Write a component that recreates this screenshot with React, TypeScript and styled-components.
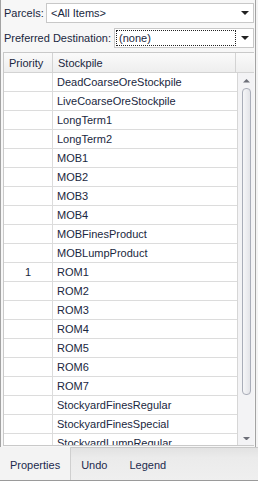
import { createGlobalStyle } from "styled-components"
import styled from "styled-components"

const GlobalStyle = createGlobalStyle`
  html, body {
    margin: 0;
    padding: 0;
    background: #f2f2f2;
  }
  body {
    font-family: "Liberation Sans", Arial, sans-serif;
    font-size: 11px;
    color: #1a2740;
  }
`

const Window = styled.div`
  width: 258px;
  height: 481px;
  display: flex;
  flex-direction: column;
  background: #f4f4f4;
  overflow: hidden;
`

const Body = styled.div`
  flex: 1;
  min-height: 0;
  display: flex;
  flex-direction: column;
  border-left: 1px solid #a3a3a3;
  border-right: 1px solid #a3a3a3;
  margin-right: 2px;
  padding: 3px 1px 0 2px;
  background: #f7f7f7;
`

const FieldRow = styled.div<{ $mt?: number }>`
  display: flex;
  align-items: center;
  margin-top: ${(p) => p.$mt ?? 0}px;
`

const Label = styled.span`
  padding-left: 1px;
  white-space: nowrap;
`

const Combo = styled.div<{ $left: number }>`
  margin-left: auto;
  width: ${(p) => 252 - p.$left}px;
  height: 18px;
  border: 1px solid #c8c8c8;
  background: #fff;
  display: flex;
  align-items: center;
  box-sizing: content-box;
`

const ComboValue = styled.div<{ $focused?: boolean }>`
  flex: 1;
  height: 14px;
  line-height: 14px;
  margin-left: 1px;
  padding-left: 2px;
  border: 1px ${(p) => (p.$focused ? "dotted #222" : "solid transparent")};
`

const ComboButton = styled.div`
  width: 17px;
  height: 18px;
  display: flex;
  align-items: center;
  justify-content: center;
`

const Grid = styled.div`
  margin-top: 4px;
  flex: 1;
  min-height: 0;
  border: 1px solid #c9c9c9;
  border-right: none;
  background: #fff;
  display: flex;
  flex-direction: column;
  margin-bottom: 1px;
`

const HeaderRow = styled.div`
  display: grid;
  grid-template-columns: 49px 183px 1fr;
  height: 19px;
  border-bottom: 1px solid #d3d3d3;
  background: linear-gradient(#fafafa, #eeeeee);
`

const HeaderCell = styled.div<{ $last?: boolean }>`
  display: flex;
  align-items: center;
  padding-left: 5px;
  border-right: ${(p) => (p.$last ? "none" : "1px solid #d3d3d3")};
`

const GridBody = styled.div`
  flex: 1;
  min-height: 0;
  display: flex;
  overflow: hidden;
`

const Rows = styled.div`
  width: 233px;
  overflow: hidden;
`

const Row = styled.div`
  display: grid;
  grid-template-columns: 49px 1fr;
  height: 18px;
  border-bottom: 1px solid #dcdcdc;
`

const Cell = styled.div<{ $center?: boolean }>`
  display: flex;
  align-items: center;
  padding-left: ${(p) => (p.$center ? 0 : 4)}px;
  justify-content: ${(p) => (p.$center ? "center" : "flex-start")};
  border-right: 1px solid #dcdcdc;
  white-space: nowrap;
  &:last-child {
    border-right: none;
  }
`

const Scrollbar = styled.div`
  flex: 1;
  border-left: 1px solid #d6d6d6;
  background: #f3f3f5;
  display: flex;
  flex-direction: column;
  align-items: center;
  padding: 6px 0 5px;
`

const Thumb = styled.div`
  width: 7px;
  height: 305px;
  margin-top: 5px;
  margin-bottom: auto;
  border: 1px solid #a9adb8;
  border-radius: 4px;
  background: linear-gradient(90deg, #f6f6f8, #e3e4e8);
`

const TabStrip = styled.div`
  height: 32px;
  display: flex;
  border-top: 1px solid #c9c9c9;
  border-bottom: 1px solid #9a9a9a;
  background: linear-gradient(#e2e2e2, #ebebeb 30%, #efefef);
`

const Tab = styled.div<{ $active?: boolean }>`
  display: flex;
  align-items: center;
  padding: 2px ${(p) => (p.$active ? 10 : 12)}px 0 10px;
  background: ${(p) => (p.$active ? "#f3f3f3" : "transparent")};
  border-right: ${(p) => (p.$active ? "1px solid #cfcfcf" : "none")};
  margin-top: ${(p) => (p.$active ? -1 : 0)}px;
  font-size: 11px;
  color: #1c2a4d;
`

const Arrow = ({ color = "#222", up = false, w = 8 }: { color?: string; up?: boolean; w?: number }) => (
  <svg width={w} height={w / 2} viewBox="0 0 8 4">
    <path d={up ? "M0 4 L4 0 L8 4 Z" : "M0 0 L8 0 L4 4 Z"} fill={color} />
  </svg>
)

const stockpiles = [
  "DeadCoarseOreStockpile",
  "LiveCoarseOreStockpile",
  "LongTerm1",
  "LongTerm2",
  "MOB1",
  "MOB2",
  "MOB3",
  "MOB4",
  "MOBFinesProduct",
  "MOBLumpProduct",
  "ROM1",
  "ROM2",
  "ROM3",
  "ROM4",
  "ROM5",
  "ROM6",
  "ROM7",
  "StockyardFinesRegular",
  "StockyardFinesSpecial",
  "StockyardLumpRegular",
]

const priorities: Record<string, string> = { ROM1: "1" }

export default function App() {
  return (
    <>
      <GlobalStyle />
      <Window>
        <Body>
          <FieldRow>
            <Label>Parcels:</Label>
            <Combo $left={46}>
              <ComboValue>&lt;All Items&gt;</ComboValue>
              <ComboButton>
                <Arrow />
              </ComboButton>
            </Combo>
          </FieldRow>
          <FieldRow $mt={5}>
            <Label>Preferred Destination:</Label>
            <Combo $left={114}>
              <ComboValue $focused>(none)</ComboValue>
              <ComboButton>
                <Arrow />
              </ComboButton>
            </Combo>
          </FieldRow>
          <Grid>
            <HeaderRow>
              <HeaderCell>Priority</HeaderCell>
              <HeaderCell>Stockpile</HeaderCell>
              <HeaderCell $last />
            </HeaderRow>
            <GridBody>
              <Rows>
                {stockpiles.map((name) => (
                  <Row key={name}>
                    <Cell $center>{priorities[name] ?? ""}</Cell>
                    <Cell>{name}</Cell>
                  </Row>
                ))}
              </Rows>
              <Scrollbar>
                <Arrow up color="#6d6f78" w={7} />
                <Thumb />
                <Arrow color="#6d6f78" w={7} />
              </Scrollbar>
            </GridBody>
          </Grid>
        </Body>
        <TabStrip>
          <Tab $active>Properties</Tab>
          <Tab>Undo</Tab>
          <Tab>Legend</Tab>
        </TabStrip>
      </Window>
    </>
  )
}
